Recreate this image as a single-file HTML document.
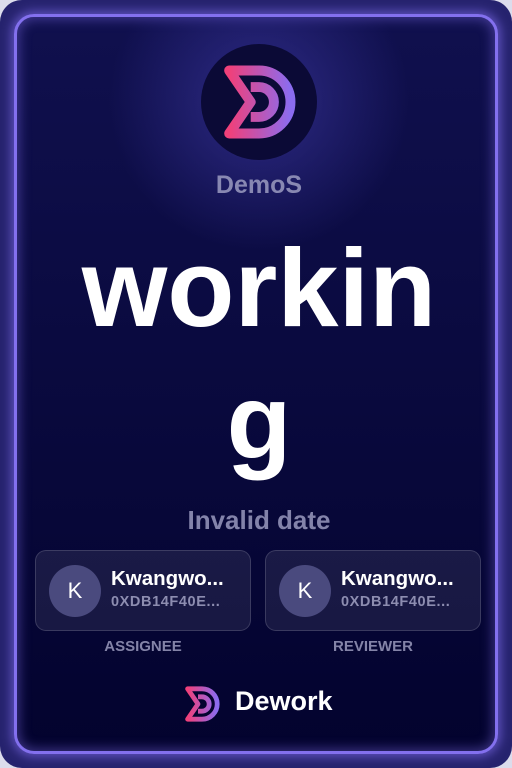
<!DOCTYPE html>
<html><head><meta charset="utf-8"><style>
*{margin:0;padding:0;box-sizing:border-box}
html,body{width:512px;height:768px;background:#dcdcec;overflow:hidden;font-family:"Liberation Sans",sans-serif}
.outer{position:absolute;left:0;top:0;width:512px;height:768px;border-radius:22px;background:#26236e}
.card{position:absolute;left:14px;top:14px;width:484px;height:740px;border-radius:20px;border:3px solid #8370ee;box-shadow:0 0 10px 3px rgba(130,110,240,.6),inset 0 0 12px 2px rgba(130,110,240,.45);background:linear-gradient(#10104e,#03032e);overflow:hidden}
.glow{position:absolute;left:0;top:0;width:100%;height:100%;background:radial-gradient(circle 150px at 242px 84px,rgba(60,55,160,.7),rgba(40,35,130,0) 100%)}
.logo{position:absolute;left:184px;top:27px;width:116px;height:116px;border-radius:50%;background:#0b0a36}
.t{position:absolute;left:0;width:484px;text-align:center;font-weight:bold}
.box{position:absolute;top:533px;width:216px;height:81px;border-radius:11px;background:rgba(255,255,255,.08);border:1px solid rgba(255,255,255,.15)}
.av{position:absolute;left:13px;top:14px;width:52px;height:52px;border-radius:50%;background:#4a4a7e;color:#fff;font-size:22px;text-align:center;line-height:52px}
.nm{position:absolute;left:75px;top:16px;color:#fff;font-weight:bold;font-size:20.5px}
.ad{position:absolute;left:75px;top:43px;color:#8d8db0;font-weight:bold;font-size:14.5px;letter-spacing:.6px}
.lb{position:absolute;top:621px;width:216px;text-align:center;color:#8484a8;font-weight:bold;font-size:15px}
</style></head><body>
<div class="outer"></div>
<div class="card">
<div class="glow"></div>
<div class="logo"><svg width="116" height="116" viewBox="-20 -20 140 140"><defs><linearGradient id="g" x1="0" x2="1"><stop offset="0" stop-color="#f0407a"/><stop offset="1" stop-color="#8b6cf0"/></linearGradient></defs><path d="M14 12H50A38 38 0 0 1 50 88H14L40 50Z M40 32H50A18 18 0 0 1 50 68H40" fill="none" stroke="url(#g)" stroke-width="12" stroke-linejoin="round"/></svg></div>
<div class="t" style="top:154px;font-size:25px;color:#8888b2">DemoS</div>
<div class="t" style="top:212px;font-size:110px;color:#fff;line-height:120px">workin</div>
<div class="t" style="top:345px;font-size:106px;color:#fff;line-height:120px">g</div>
<div class="t" style="top:488px;font-size:26px;color:#8383aa">Invalid date</div>
<div class="box" style="left:18px"><div class="av">K</div><div class="nm">Kwangwo...</div><div class="ad">0XDB14F40E...</div></div>
<div class="box" style="left:248px"><div class="av">K</div><div class="nm">Kwangwo...</div><div class="ad">0XDB14F40E...</div></div>
<div class="lb" style="left:18px">ASSIGNEE</div>
<div class="lb" style="left:248px">REVIEWER</div>
<div style="position:absolute;left:165px;top:667px;width:40px;height:40px"><svg width="40" height="40" viewBox="0 0 100 100"><defs><linearGradient id="g2" x1="0" x2="1"><stop offset="0" stop-color="#f0407a"/><stop offset="1" stop-color="#8b6cf0"/></linearGradient></defs><path d="M14 12H50A38 38 0 0 1 50 88H14L40 50Z M40 32H50A18 18 0 0 1 50 68H40" fill="none" stroke="url(#g2)" stroke-width="12" stroke-linejoin="round"/></svg></div>
<div style="position:absolute;left:218px;top:669px;color:#fff;font-weight:bold;font-size:27px">Dework</div>
</div>
</body></html>
